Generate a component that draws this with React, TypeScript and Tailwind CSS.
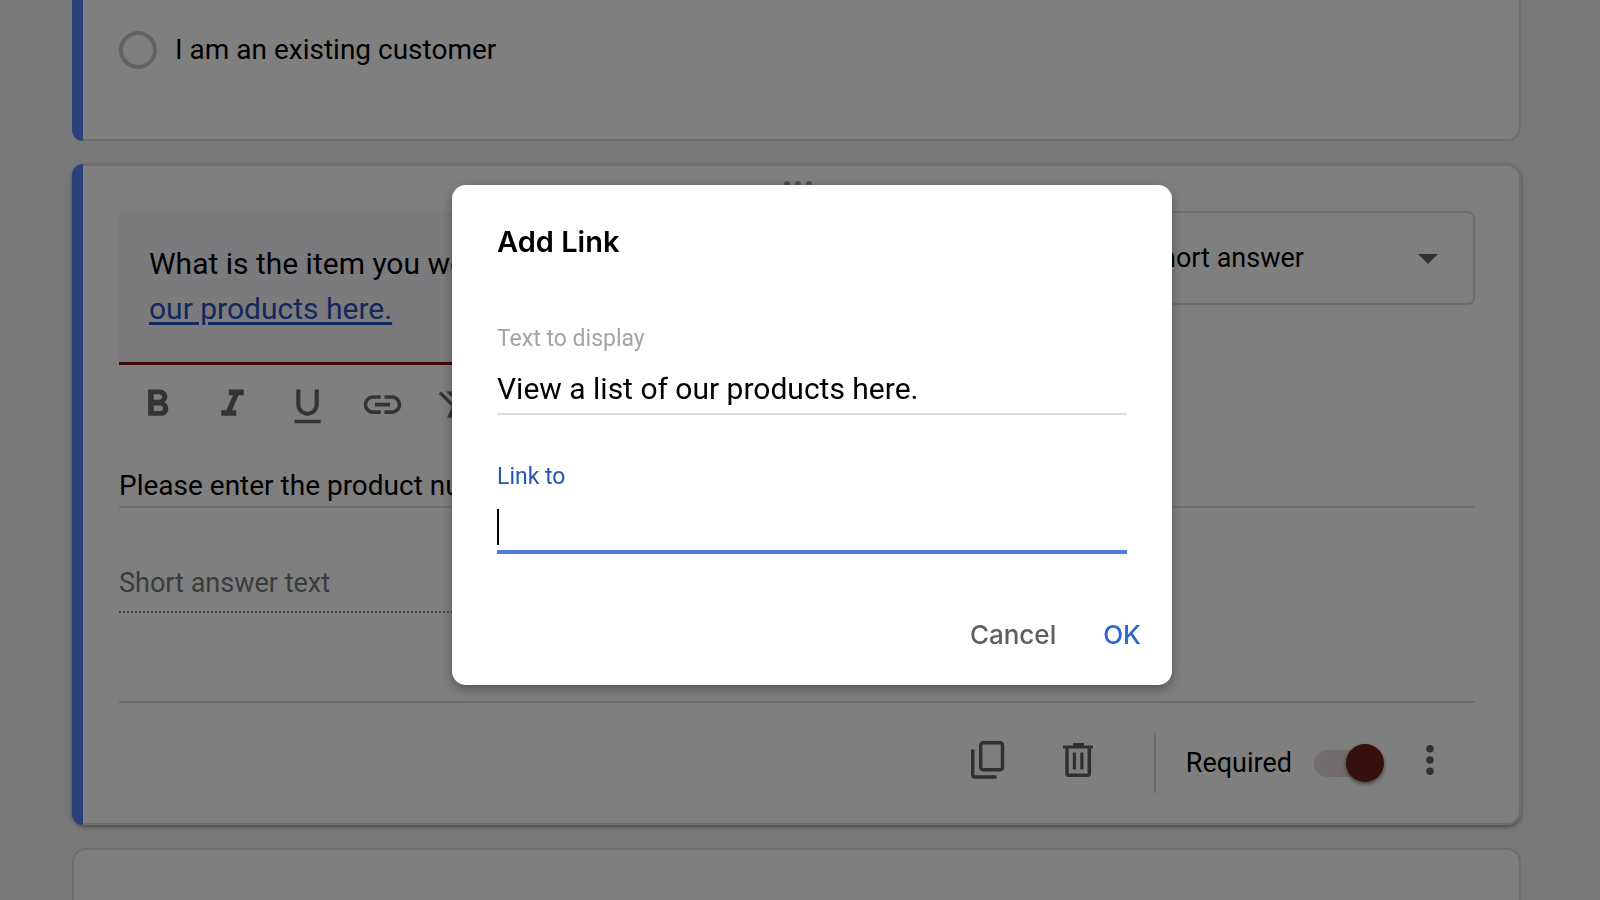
import type { ReactNode } from "react";

function BarCard({ children, raised = false, flushTop = false }: { children: ReactNode; raised?: boolean; flushTop?: boolean }) {
  return (
    <section
      className={
        "flex shrink-0 rounded-[14px] " +
        (flushTop ? "rounded-t-none " : "") +
        (raised ? "shadow-[0_2px_4px_rgba(0,0,0,0.4)]" : "")
      }
    >
      <div className={"w-[11px] shrink-0 bg-[#5183f3] " + (flushTop ? "rounded-bl-[14px]" : "rounded-l-[14px]")} />
      <div
        className={
          "relative min-w-0 flex-1 border-2 border-l-0 border-[#dcdce0] bg-white pr-[44px] pl-[36px] " +
          (flushTop ? "rounded-br-[14px] border-t-0" : "rounded-r-[14px]")
        }
      >
        {children}
      </div>
    </section>
  );
}

function ToolButton({ label, children }: { label: string; children: ReactNode }) {
  return (
    <button type="button" aria-label={label} className="shrink-0">
      <svg viewBox="0 0 24 24" className="size-[45px] fill-current">
        {children}
      </svg>
    </button>
  );
}

function QuestionCard() {
  return (
    <BarCard raised>
      <div aria-hidden="true" className="absolute top-[15px] left-[701px] grid grid-cols-3 gap-[5px]">
        {[0, 1, 2, 3, 4, 5].map((dot) => (
          <span key={dot} className="size-[6px] rounded-full bg-[#9a9da1]" />
        ))}
      </div>

      <div className="flex items-start justify-between gap-6 pt-[45px]">
        <div className="h-[154px] w-[860px] border-b-[3px] border-[#7a1216] bg-[#f6f6fb] px-[30px] pt-[30px] text-[30px] leading-[45px] text-black">
          <p>
            What is the item you would like to purchase? View a list of{" "}
            <a href="#products" className="text-[#2a50b8] underline decoration-[3px] underline-offset-[3px]">
              our products here.
            </a>
          </p>
        </div>
        <div className="relative w-[420px]">
          <select
            aria-label="Question type"
            defaultValue="Short answer"
            className="h-[94px] w-full appearance-none rounded-[7px] border-2 border-[#dadce0] bg-white pr-20 pl-[88px] text-[27px] text-black"
          >
            <option>Short answer</option>
            <option>Paragraph</option>
            <option>Multiple choice</option>
          </select>
          <svg viewBox="0 0 20 10" className="pointer-events-none absolute top-[43px] right-[37px] h-[10px] w-[20px] fill-[#5f6368]">
            <path d="M0 0h20L10 10z" />
          </svg>
        </div>
      </div>

      <div className="mt-[17px] ml-[16px] flex h-[45px] gap-[30px] text-[#66686b]">
        <ToolButton label="Bold">
          <path d="M15.6 10.79c.97-.67 1.65-1.77 1.65-2.79 0-2.26-1.75-4-4-4H7v14h7.04c2.09 0 3.71-1.7 3.71-3.79 0-1.52-.86-2.82-2.15-3.42zM10 6.5h3c.83 0 1.5.67 1.5 1.5s-.67 1.5-1.5 1.5h-3v-3zm3.5 9H10v-3h3.5c.83 0 1.5.67 1.5 1.5s-.67 1.5-1.5 1.5z" />
        </ToolButton>
        <ToolButton label="Italic">
          <path d="M10 4v3h2.21l-3.42 8H6v3h8v-3h-2.21l3.42-8H18V4z" />
        </ToolButton>
        <ToolButton label="Underline">
          <path d="M12 18c3.31 0 6-2.69 6-6V4h-2.2v8c0 2.1-1.7 3.8-3.8 3.8S8.200 14.1 8.200 12V4H6v8c0 3.310 2.690 6 6 6zM5 20.100v1.900h14v-1.900z" />
        </ToolButton>
        <ToolButton label="Insert link">
          <path d="M3.900 12c0-1.710 1.390-3.100 3.100-3.100h4V7H7c-2.760 0-5 2.240-5 5s2.240 5 5 5h4v-1.900H7c-1.710 0-3.100-1.390-3.100-3.100zM8 13h8v-2H8v2zm9-6h-4v1.900h4c1.710 0 3.100 1.390 3.100 3.100s-1.390 3.100-3.100 3.100h-4V17h4c2.760 0 5-2.240 5-5s-2.240-5-5-5z" />
        </ToolButton>
        <ToolButton label="Remove formatting">
          <path d="M3.270 5 2 6.270l6.970 6.970L6.500 19h3l1.570-3.660L16.730 21 18 19.730 3.550 5.270zM6 5v.180L8.820 8h2.400l-.720 1.680 2.100 2.100L14.210 8H20V5z" />
        </ToolButton>
      </div>

      <input
        aria-label="Description"
        defaultValue="Please enter the product number"
        className="mt-[37px] block h-[44px] w-full border-b-2 border-[#dcdce0] bg-transparent text-[28px] text-black outline-none"
      />
      <input
        aria-label="Short answer text"
        placeholder="Short answer text"
        disabled
        className="mt-[46px] block h-[59px] w-1/2 border-b-2 border-dotted border-[#85878a] bg-transparent text-[27px] placeholder:text-[#75777a] placeholder:opacity-100"
      />

      <div className="mt-[88px] flex h-[122px] items-center justify-end border-t-2 border-[#d8d8dc] pr-[41px] text-[#5f6063]">
        <button type="button" aria-label="Duplicate" className="mr-[58px] pb-[7px]">
          <svg viewBox="0 0 34 38" className="h-[38px] w-[34px] fill-none stroke-current stroke-[3.5]">
            <rect x="9.700" y="1.750" width="21.800" height="27" rx="2.500" />
            <path d="M1.750 8.500v25.500q0 2 2 2H25.500" />
          </svg>
        </button>
        <button type="button" aria-label="Delete" className="mr-[61px] pb-[7px]">
          <svg viewBox="0 0 30 34" className="h-[34px] w-[30px] fill-none stroke-current">
            <path d="M0 4h30M10 1.500h11" strokeWidth="3" />
            <path d="M4 4v26.300q0 2 2 2h18.300q2 0 2-2V4" strokeWidth="3.500" />
            <path d="M11.400 9.500v17M18.900 9.500v17" strokeWidth="3.200" />
          </svg>
        </button>
        <div className="mr-[30px] h-[60px] w-[2px] bg-[#d8d8dc]" />
        <label htmlFor="required" className="mr-[22px] text-[27px] leading-[32px] text-black">
          Required
        </label>
        <input
          id="required"
          type="checkbox"
          role="switch"
          defaultChecked
          className="mr-[42px] flex h-[27px] w-[70px] appearance-none items-center justify-end rounded-full bg-[#e6dcdb] before:size-[38px] before:shrink-0 before:rounded-full before:bg-[#6b201a] before:shadow-[0_2px_4px_rgba(0,0,0,0.5)] before:content-['']"
        />
        <button type="button" aria-label="More options" className="pb-[7px]">
          <svg viewBox="0 0 8 30" className="h-[30px] w-[8px] fill-current">
            <circle cx="4" cy="3.800" r="3.800" />
            <circle cx="4" cy="15" r="3.800" />
            <circle cx="4" cy="26.200" r="3.800" />
          </svg>
        </button>
      </div>
    </BarCard>
  );
}

function AddLinkDialog() {
  return (
    <div className="fixed inset-0 flex items-center justify-center bg-black/50 pb-[30px] pl-6">
      <div
        role="dialog"
        aria-modal="true"
        aria-labelledby="dialog-title"
        className="w-[720px] rounded-[14px] bg-white pt-[39px] pb-[30px] shadow-[0_4px_12px_rgba(0,0,0,0.35)]"
      >
        <div className="flex flex-col px-[45px]">
          <h2 id="dialog-title" className="font-['Inter','Roboto',sans-serif] text-[29px] leading-[36px] font-semibold text-black">
            Add Link
          </h2>
          <label htmlFor="display" className="mt-[65px] text-[23px] leading-[28px] text-[#a3a3a3]">
            Text to display
          </label>
          <input
            id="display"
            defaultValue="View a list of our products here."
            className="mt-[10px] h-[52px] border-b-2 border-[#dcdcdc] text-[30px] text-black outline-none"
          />
          <label htmlFor="target" className="mt-[48px] text-[23px] leading-[28px] text-[#2457b5]">
            Link to
          </label>
          <div className="relative mt-[9px] flex">
            <input id="target" className="h-[54px] flex-1 border-b-4 border-[#4d7dd8] text-[30px] text-black caret-transparent outline-none" />
            <span aria-hidden="true" className="absolute top-[9px] left-0 h-[36px] w-[2px] bg-black" />
          </div>
        </div>
        <div className="mt-[61px] flex justify-end gap-[47px] pr-[31px] font-['Inter','Roboto',sans-serif] text-[26px] leading-[40px] font-medium">
          <button type="button" className="text-[#5f6063]">
            Cancel
          </button>
          <button type="button" className="text-[#2f67cc]">
            OK
          </button>
        </div>
      </div>
    </div>
  );
}

export default function App() {
  return (
    <div className="h-screen overflow-hidden bg-[#f2f0f0] font-['Roboto',sans-serif]">
      <main className="flex flex-col gap-[23px] pr-[79px] pl-[72px]">
        <BarCard flushTop>
          <label className="flex items-center gap-[18px] pt-[31px] pb-[70px] text-[28px] leading-[38px] text-black">
            <input type="radio" name="customer" className="size-[38px] appearance-none rounded-full border-4 border-[#c6c6c6]" />
            I am an existing customer
          </label>
        </BarCard>
        <QuestionCard />
        <section className="h-[120px] shrink-0 rounded-[14px] border-2 border-[#dcdce0] bg-white" />
      </main>
      <AddLinkDialog />
    </div>
  );
}
